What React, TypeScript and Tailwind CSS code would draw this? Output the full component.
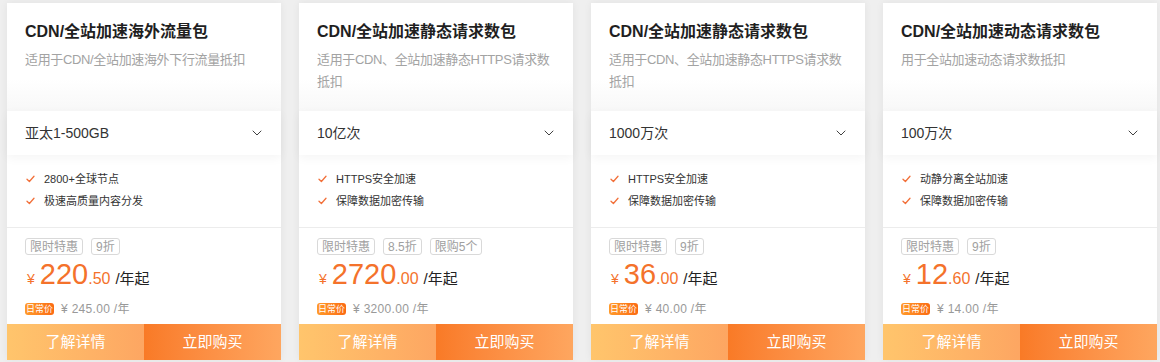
import { ChevronDown } from 'lucide-react';

type Pkg = {
  title: string;
  desc: string;
  spec: string;
  features: string[];
  tags: string[];
  price: string;
  cents: string;
  original: string;
};

const packages: Pkg[] = [
  {
    title: 'CDN/全站加速海外流量包',
    desc: '适用于CDN/全站加速海外下行流量抵扣',
    spec: '亚太1-500GB',
    features: ['2800+全球节点', '极速高质量内容分发'],
    tags: ['限时特惠', '9折'],
    price: '220',
    cents: '.50',
    original: '245.00',
  },
  {
    title: 'CDN/全站加速静态请求数包',
    desc: '适用于CDN、全站加速静态HTTPS请求数抵扣',
    spec: '10亿次',
    features: ['HTTPS安全加速', '保障数据加密传输'],
    tags: ['限时特惠', '8.5折', '限购5个'],
    price: '2720',
    cents: '.00',
    original: '3200.00',
  },
  {
    title: 'CDN/全站加速静态请求数包',
    desc: '适用于CDN、全站加速静态HTTPS请求数抵扣',
    spec: '1000万次',
    features: ['HTTPS安全加速', '保障数据加密传输'],
    tags: ['限时特惠', '9折'],
    price: '36',
    cents: '.00',
    original: '40.00',
  },
  {
    title: 'CDN/全站加速动态请求数包',
    desc: '用于全站加速动态请求数抵扣',
    spec: '100万次',
    features: ['动静分离全站加速', '保障数据加密传输'],
    tags: ['限时特惠', '9折'],
    price: '12',
    cents: '.60',
    original: '14.00',
  },
];

// small orange tick used in the feature list
const Tick = () => (
  <svg width="9" height="8" viewBox="0 0 9 8" fill="none" className="shrink-0">
    <path d="M1 4.2L3.4 6.5L8 1.3" stroke="#f2703a" strokeWidth="1.3" strokeLinecap="round" strokeLinejoin="round" />
  </svg>
);

function PackageCard({ pkg }: { pkg: Pkg }) {
  return (
    <div className="flex h-[357px] flex-col bg-white shadow-[0_0_8px_rgba(0,0,0,0.06)]">
      {/* header */}
      <div className="h-[108px] bg-gradient-to-b from-white from-70% to-[#f8f8f8] px-[18px] pt-[17px]">
        <h3 className="text-[16px] font-bold leading-[24px] text-[#1f1f1f]">{pkg.title}</h3>
        <p className="mt-[5px] text-[13px] leading-[22px] tracking-[-0.35px] text-[#a3a3a3]">{pkg.desc}</p>
      </div>

      {/* spec select */}
      <div className="relative z-10 flex h-[44px] items-center justify-between bg-white pl-[18px] pr-[16px] shadow-[0_3px_10px_rgba(0,0,0,0.045)]">
        <span className="text-[14px] text-[#333]">{pkg.spec}</span>
        <ChevronDown size={16} strokeWidth={1.4} className="text-[#333]" />
      </div>

      {/* features */}
      <div className="flex h-[73px] flex-col gap-[6px] border-b border-[#ececec] px-[19px] pt-[16px]">
        {pkg.features.map((f) => (
          <div key={f} className="flex h-[16px] items-center gap-[9px] text-[11px] text-[#333]">
            <Tick />
            <span>{f}</span>
          </div>
        ))}
      </div>

      {/* price */}
      <div className="flex flex-1 flex-col px-[18px] pt-[10px]">
        <div className="flex gap-[8px]">
          {pkg.tags.map((t) => (
            <span
              key={t}
              className="flex h-[17px] items-center rounded-[3px] border border-[#d9d9d9] px-[4px] text-[12px] leading-none text-[#a0a0a0]"
            >
              {t}
            </span>
          ))}
        </div>
        <div className="mt-[5px] flex h-[32px] items-baseline text-[#f4722b]">
          <span className="ml-[2px] text-[14px]">¥</span>
          <span className="ml-[5px] text-[29px] leading-none">{pkg.price}</span>
          <span className="text-[16px]">{pkg.cents}</span>
          <span className="ml-[5px] text-[15px] text-[#222]">/年起</span>
        </div>
        <div className="mt-[8px] flex items-center gap-[7px]">
          <span className="flex h-[12px] items-center rounded-[3px] bg-gradient-to-r from-[#ff9a2a] to-[#fb6a12] px-[1px] text-[9px] leading-none text-white">
            日常价
          </span>
          <span className="text-[12px] tracking-[0.3px] text-[#999]">¥ {pkg.original} /年</span>
        </div>
      </div>

      {/* buttons */}
      <div className="flex h-[36px]">
        <button className="flex-1 bg-gradient-to-r from-[#ffc56c] to-[#fda662] text-[15px] text-white">了解详情</button>
        <button className="flex-1 bg-gradient-to-r from-[#f97a26] to-[#fea65f] text-[15px] text-white">立即购买</button>
      </div>
    </div>
  );
}

export default function App() {
  return (
    <div
      className="h-[362px] w-[1160px] overflow-hidden bg-[#efefef] pl-[7px] pr-[3px] pt-[3px]"
      style={{ fontFamily: '"Liberation Sans", "Noto Sans CJK SC", sans-serif' }}
    >
      <div className="grid grid-cols-4 gap-[18px]">
        {packages.map((p, i) => (
          <PackageCard key={i} pkg={p} />
        ))}
      </div>
    </div>
  );
}
